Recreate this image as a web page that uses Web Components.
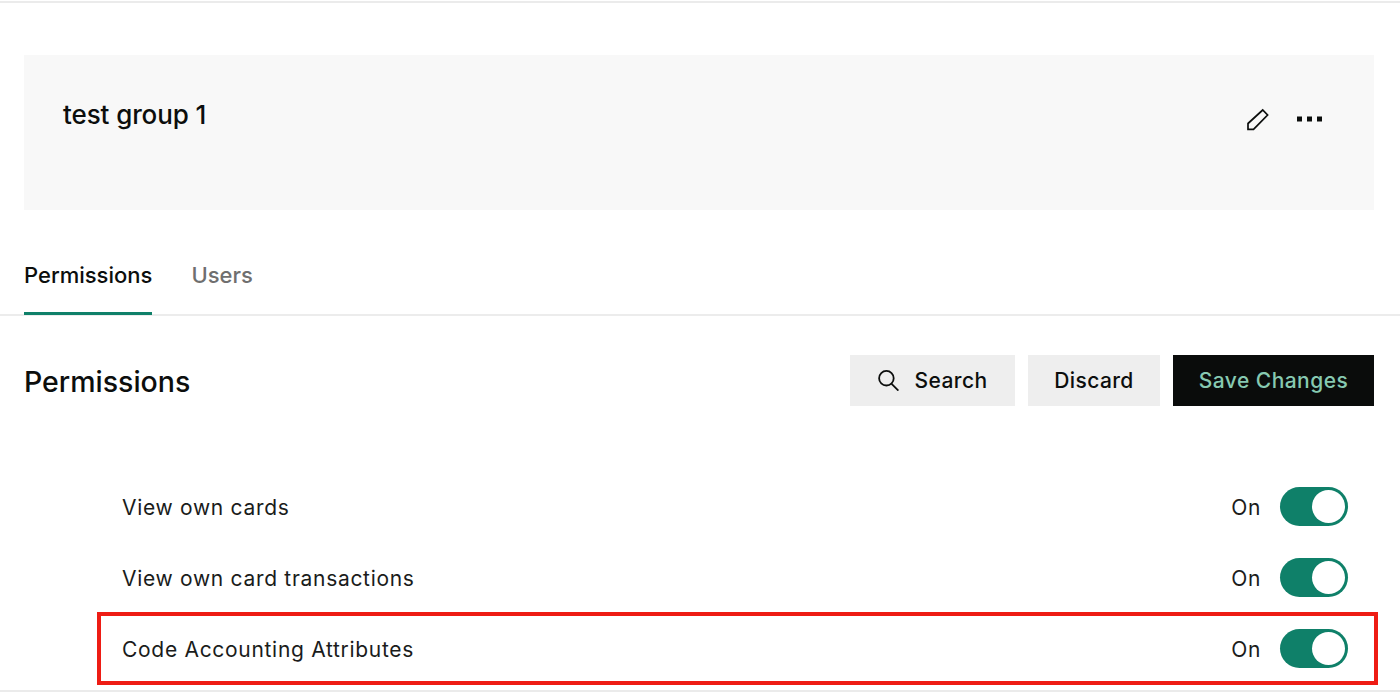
<!DOCTYPE html>
<html lang="en">
<head>
<meta charset="utf-8">
<title>test group 1</title>
<style>
  html, body { margin: 0; height: 100%; background: #fff; overflow: hidden; }
  body { font-family: Inter, "Liberation Sans", sans-serif; color: #0c0e0d; }
</style>
</head>
<body>
<group-page>
  <group-card slot="card" title-text="test group 1"></group-card>
  <tab-bar slot="tabs"></tab-bar>
  <section-head slot="head" heading="Permissions"></section-head>
  <perm-row slot="rows" label="View own cards"></perm-row>
  <perm-row slot="rows" label="View own card transactions"></perm-row>
  <perm-row slot="rows" label="Code Accounting Attributes" highlight></perm-row>
</group-page>

<script>
class GroupPage extends HTMLElement {
  constructor() {
    super();
    this.attachShadow({ mode: 'open' });
    this.shadowRoot.innerHTML = `
      <style>
        :host {
          display: flex;
          flex-direction: column;
          box-sizing: border-box;
          border-top: 2px solid #ebebeb;
          margin-top: 1px;
          height: 695px;
        }
        .card { padding: 52px 26px 0 24px; }
        .tabs { margin-top: 44px; }
        .head { padding: 39px 26px 0 24px; }
        .rows { display: flex; flex-direction: column; padding: 65px 22px 0 98px; }
        .foot { margin-top: 6px; border-top: 2px solid #ebebeb; }
      </style>
      <div class="card"><slot name="card"></slot></div>
      <div class="tabs"><slot name="tabs"></slot></div>
      <div class="head"><slot name="head"></slot></div>
      <div class="rows"><slot name="rows"></slot></div>
      <div class="foot"></div>
    `;
  }
}

class GroupCard extends HTMLElement {
  constructor() {
    super();
    this.attachShadow({ mode: 'open' });
    this.shadowRoot.innerHTML = `
      <style>
        :host {
          display: flex;
          align-items: flex-start;
          justify-content: space-between;
          height: 155px;
          background: #f8f8f8;
          padding: 44px 52px 0 39px;
          box-sizing: border-box;
        }
        h2 {
          margin: 0;
          font-size: 26px;
          line-height: 32px;
          font-weight: 500;
          letter-spacing: -0.1px;
        }
        .tools { display: flex; align-items: flex-start; gap: 27px; padding-top: 9px; }
        svg { display: block; }
        .more { margin-top: 8px; }
      </style>
      <h2></h2>
      <div class="tools">
        <svg width="24" height="24" viewBox="0 0 24 24" fill="none" stroke="#0c0e0d" stroke-width="1.7" stroke-linejoin="miter">
          <path d="M2 15.5 L16.7 2 L21.6 7 L7.5 21.3 L2 21.3 Z"/>
        </svg>
        <svg class="more" width="25" height="6" viewBox="0 0 25 6" fill="#0c0e0d">
          <rect x="0" y="0.5" width="5" height="5"/>
          <rect x="10" y="0.5" width="5" height="5"/>
          <rect x="20" y="0.5" width="5" height="5"/>
        </svg>
      </div>
    `;
    this.shadowRoot.querySelector('h2').textContent = this.getAttribute('title-text');
  }
}

class TabBar extends HTMLElement {
  constructor() {
    super();
    this.attachShadow({ mode: 'open' });
    this.shadowRoot.innerHTML = `
      <style>
        :host {
          display: flex;
          gap: 39px;
          padding-left: 24px;
          border-bottom: 2px solid #ececec;
          font-size: 22px;
          font-weight: 500;
        }
        .tab {
          height: 61px;
          box-sizing: border-box;
          padding-top: 7px;
          line-height: 28px;
          color: #6f6f6f;
          margin-bottom: -1px;
        }
        .active { color: #0c0e0d; border-bottom: 3px solid #0f8069; }
      </style>
      <div class="tab active">Permissions</div>
      <div class="tab">Users</div>
    `;
  }
}

class SectionHead extends HTMLElement {
  constructor() {
    super();
    this.attachShadow({ mode: 'open' });
    this.shadowRoot.innerHTML = `
      <style>
        :host { display: flex; align-items: center; justify-content: space-between; height: 51px; }
        h3 { margin: 0; padding-top: 2px; font-size: 28.5px; font-weight: 500; }
        .actions { display: flex; gap: 13px; }
        button {
          display: flex;
          align-items: center;
          justify-content: center;
          gap: 16px;
          height: 51px;
          padding: 0;
          border: 0;
          border-radius: 0;
          background: #eeeeee;
          color: #0c0e0d;
          font: 500 21px Inter, "Liberation Sans", sans-serif;
          letter-spacing: 0.4px;
        }
        .search { width: 165px; }
        .discard { width: 132px; }
        .save { width: 201px; background: #0a0c0b; color: #86c9b1; letter-spacing: 0.45px; }
        svg { display: block; }
      </style>
      <h3></h3>
      <div class="actions">
        <button class="search">
          <svg width="21" height="21" viewBox="0 0 21 21" fill="none" stroke="#0c0e0d" stroke-width="1.8">
            <circle cx="8.4" cy="8.2" r="7.3"/>
            <path d="M13.6 13.8 L20.4 20.6"/>
          </svg>
          <span>Search</span>
        </button>
        <button class="discard">Discard</button>
        <button class="save">Save Changes</button>
      </div>
    `;
    this.shadowRoot.querySelector('h3').textContent = this.getAttribute('heading');
  }
}

class PermRow extends HTMLElement {
  constructor() {
    super();
    this.attachShadow({ mode: 'open' });
    this.shadowRoot.innerHTML = `
      <style>
        :host {
          display: flex;
          align-items: center;
          justify-content: space-between;
          position: relative;
          height: 71px;
          padding: 0 30px 0 24px;
          font-size: 21px;
          font-weight: 400;
          letter-spacing: 0.7px;
          color: #1a1c1b;
        }
        :host([highlight])::after {
          content: "";
          position: absolute;
          inset: -1px 0 -1px -1px;
          border: 4px solid #ee1c14;
          pointer-events: none;
        }
        .label, .state { padding-top: 1px; }
        .right { display: flex; align-items: center; gap: 19px; }
        .toggle {
          position: relative;
          width: 68px;
          height: 39px;
          border-radius: 20px;
          background: #0f8069;
        }
        .toggle::after {
          content: "";
          position: absolute;
          top: 3px;
          right: 3px;
          width: 33px;
          height: 33px;
          border-radius: 50%;
          background: #fff;
        }
      </style>
      <span class="label"></span>
      <div class="right"><span class="state">On</span><div class="toggle"></div></div>
    `;
    this.shadowRoot.querySelector('.label').textContent = this.getAttribute('label');
  }
}

customElements.define('group-page', GroupPage);
customElements.define('group-card', GroupCard);
customElements.define('tab-bar', TabBar);
customElements.define('section-head', SectionHead);
customElements.define('perm-row', PermRow);
</script>
</body>
</html>
